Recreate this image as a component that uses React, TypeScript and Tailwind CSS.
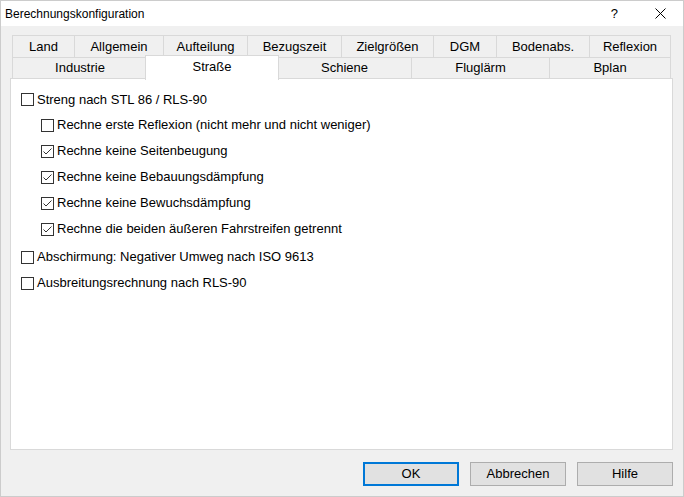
const rowOne = [
  { label: "Land", w: 62 },
  { label: "Allgemein", w: 89 },
  { label: "Aufteilung", w: 84 },
  { label: "Bezugszeit", w: 94 },
  { label: "Zielgrößen", w: 92 },
  { label: "DGM", w: 63 },
  { label: "Bodenabs.", w: 93 },
  { label: "Reflexion", w: 82 },
];

const rowTwo = [
  { label: "Industrie", w: 135 },
  { label: "Straße", w: 130, active: true },
  { label: "Schiene", w: 134 },
  { label: "Fluglärm", w: 138 },
  { label: "Bplan", w: 122 },
];

function Box({ checked }: { checked?: boolean }) {
  return (
    <span className="flex h-[13px] w-[13px] shrink-0 items-center justify-center border border-[#333333] bg-white">
      {checked && (
        <svg width="11" height="11" viewBox="0 0 11 11">
          <polyline
            points="1.5,5.5 4,8 9.5,2.5"
            fill="none"
            stroke="#333333"
            strokeWidth="1"
          />
        </svg>
      )}
    </span>
  );
}

function Option({
  label,
  checked,
  indent,
  className = "h-[26px]",
}: {
  label: string;
  checked?: boolean;
  indent?: boolean;
  className?: string;
}) {
  return (
    <div className={`flex items-center gap-[3px] ${indent ? "pl-[30px]" : "pl-[10px]"} ${className}`}>
      <Box checked={checked} />
      <span className="text-[13px] text-black">{label}</span>
    </div>
  );
}

function Button({ label, primary }: { label: string; primary?: boolean }) {
  return (
    <button
      className={`h-[24px] w-[96px] bg-[#e1e1e1] text-[13px] text-black ${
        primary ? "border-2 border-[#0078d7]" : "border border-[#adadad]"
      }`}
    >
      {label}
    </button>
  );
}

export default function App() {
  return (
    <div
      className="flex h-[497px] w-[684px] flex-col border border-[#cccccc] bg-[#f0f0f0]"
      style={{ fontFamily: '"Liberation Sans", Arial, sans-serif' }}
    >
      {/* title bar */}
      <div className="flex h-[25px] items-center bg-white pl-[4px]">
        <span className="text-[12px] text-black">Berechnungskonfiguration</span>
        <span className="ml-auto mr-[37px] text-[13px] text-black">?</span>
        <svg width="11" height="11" viewBox="0 0 11 11" className="mr-[17px]">
          <path d="M0.5 0.5 L10.5 10.5 M10.5 0.5 L0.5 10.5" stroke="#000" strokeWidth="1" />
        </svg>
      </div>

      <div className="flex flex-col pl-[9px] pt-[9px]">
        {/* tab strip */}
        <div className="flex pl-[2px]">
          {rowOne.map((t, i) => (
            <div
              key={t.label}
              style={{ width: t.w }}
              className={`flex h-[22px] items-center justify-center border-t border-l border-[#d9d9d9] text-[13px] text-black ${
                i === rowOne.length - 1 ? "border-r" : ""
              }`}
            >
              {t.label}
            </div>
          ))}
        </div>
        <div className="flex pl-[2px]">
          {rowTwo.map((t, i) => (
            <div
              key={t.label}
              style={{ width: t.w }}
              className={`relative flex h-[21px] items-center justify-center border-t border-l border-[#d9d9d9] text-[13px] text-black ${
                i === rowTwo.length - 1 ? "border-r" : ""
              }`}
            >
              {t.active ? (
                <div className="absolute -top-[3px] -left-[3px] -right-[2px] -bottom-[2px] z-10 flex items-center justify-center border-x border-t border-[#d9d9d9] bg-white pb-[3px]">
                  {t.label}
                </div>
              ) : (
                t.label
              )}
            </div>
          ))}
        </div>

        {/* page content */}
        <div className="flex h-[372px] w-[663px] flex-col border border-[#d9d9d9] bg-white pt-[8px]">
          <Option label="Streng nach STL 86 / RLS-90" className="h-[25px]" />
          <Option indent label="Rechne erste Reflexion (nicht mehr und nicht weniger)" />
          <Option indent checked label="Rechne keine Seitenbeugung" />
          <Option indent checked label="Rechne keine Bebauungsdämpfung" />
          <Option indent checked label="Rechne keine Bewuchsdämpfung" />
          <Option indent checked label="Rechne die beiden äußeren Fahrstreifen getrennt" />
          <Option label="Abschirmung: Negativer Umweg nach ISO 9613" className="mt-[2px] h-[26px]" />
          <Option label="Ausbreitungsrechnung nach RLS-90" />
        </div>
      </div>

      {/* dialog buttons */}
      <div className="mt-[12px] flex justify-end gap-[11px] pr-[10px]">
        <Button label="OK" primary />
        <Button label="Abbrechen" />
        <Button label="Hilfe" />
      </div>
    </div>
  );
}
